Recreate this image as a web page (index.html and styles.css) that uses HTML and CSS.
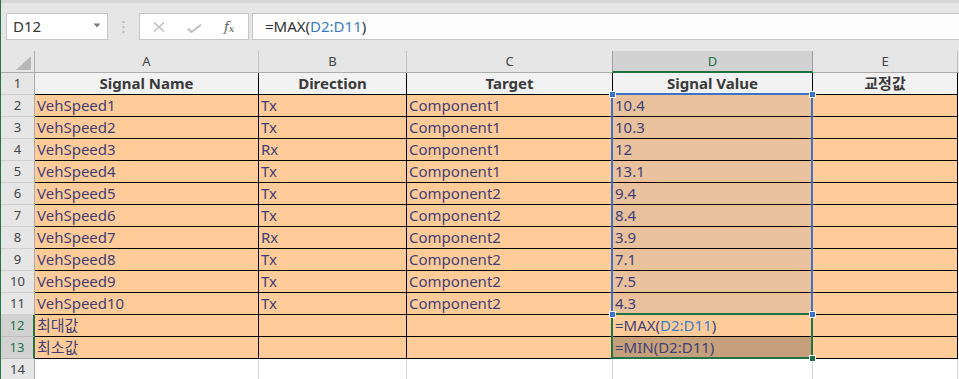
FILE: index.html
```html
<!DOCTYPE html>
<html>
<head>
<meta charset="utf-8">
<link rel="stylesheet" href="styles.css">
</head>
<body>
<div class="app">
  <div class="topstrip"></div>
  <div class="fbar">
    <div class="namebox">
      <span class="name">D12</span>
      <svg class="caret" width="8" height="5" viewBox="0 0 8 5"><path d="M0.5 0.5 L7.5 0.5 L4 4.5 Z" fill="#7b7b7b"/></svg>
    </div>
    <div class="sep">
      <svg width="3" height="12" viewBox="0 0 3 12"><rect x="0.5" y="0" width="2" height="2" fill="#b9b9b9"/><rect x="0.5" y="5" width="2" height="2" fill="#b9b9b9"/><rect x="0.5" y="10" width="2" height="2" fill="#b9b9b9"/></svg>
    </div>
    <div class="btns">
      <svg class="ico-x" width="12" height="10" viewBox="0 0 12 10"><path d="M1 0.5 L11 9.5 M11 0.5 L1 9.5" stroke="#bdbdbd" stroke-width="1.4" fill="none"/></svg>
      <svg class="ico-ok" width="15" height="9" viewBox="0 0 15 9"><path d="M0.8 4.5 L4.5 8 L14 0.8" stroke="#bdbdbd" stroke-width="2" fill="none"/></svg>
      <span class="fx"><i>f</i><sub>x</sub></span>
    </div>
    <div class="formula">=MAX(<span class="ref">D2:D11</span>)</div>
  </div>

  <div class="sheet">
    <div class="corner"><svg width="15" height="14" viewBox="0 0 15 14"><path d="M15 0 L15 14 L0 14 Z" fill="#b7b7b7"/></svg></div>
    <div class="ch">A</div><div class="ch">B</div><div class="ch">C</div><div class="ch sel">D</div><div class="ch">E</div><div class="ch last"></div>

    <div class="rh">1</div>
    <div class="c hd">Signal Name</div><div class="c hd">Direction</div><div class="c hd">Target</div><div class="c hd">Signal Value</div><div class="c hd">교정값</div><div class="c x"></div>

    <div class="rh">2</div><div class="c">VehSpeed1</div><div class="c">Tx</div><div class="c">Component1</div><div class="c rng">10.4</div><div class="c"></div><div class="c x"></div>
    <div class="rh">3</div><div class="c">VehSpeed2</div><div class="c">Tx</div><div class="c">Component1</div><div class="c rng">10.3</div><div class="c"></div><div class="c x"></div>
    <div class="rh">4</div><div class="c">VehSpeed3</div><div class="c">Rx</div><div class="c">Component1</div><div class="c rng">12</div><div class="c"></div><div class="c x"></div>
    <div class="rh">5</div><div class="c">VehSpeed4</div><div class="c">Tx</div><div class="c">Component1</div><div class="c rng">13.1</div><div class="c"></div><div class="c x"></div>
    <div class="rh">6</div><div class="c">VehSpeed5</div><div class="c">Tx</div><div class="c">Component2</div><div class="c rng">9.4</div><div class="c"></div><div class="c x"></div>
    <div class="rh">7</div><div class="c">VehSpeed6</div><div class="c">Tx</div><div class="c">Component2</div><div class="c rng">8.4</div><div class="c"></div><div class="c x"></div>
    <div class="rh">8</div><div class="c">VehSpeed7</div><div class="c">Rx</div><div class="c">Component2</div><div class="c rng">3.9</div><div class="c"></div><div class="c x"></div>
    <div class="rh">9</div><div class="c">VehSpeed8</div><div class="c">Tx</div><div class="c">Component2</div><div class="c rng">7.1</div><div class="c"></div><div class="c x"></div>
    <div class="rh">10</div><div class="c">VehSpeed9</div><div class="c">Tx</div><div class="c">Component2</div><div class="c rng">7.5</div><div class="c"></div><div class="c x"></div>
    <div class="rh">11</div><div class="c">VehSpeed10</div><div class="c">Tx</div><div class="c">Component2</div><div class="c rng">4.3</div><div class="c"></div><div class="c x"></div>
    <div class="rh sel">12</div><div class="c">최대값</div><div class="c"></div><div class="c"></div><div class="c">=MAX(<span class="ref">D2:D11</span>)</div><div class="c"></div><div class="c x"></div>
    <div class="rh sel">13</div><div class="c">최소값</div><div class="c"></div><div class="c"></div><div class="c dark">=MIN(D2:D11)</div><div class="c"></div><div class="c x"></div>
    <div class="rh">14</div><div class="e"></div><div class="e"></div><div class="e"></div><div class="e"></div><div class="e"></div><div class="e x"></div>
  </div>

  <div class="blue-box"></div>
  <div class="green-box"></div>
  <div class="hdl bh h1"></div>
  <div class="hdl bh h2"></div>
  <div class="hdl bh h3"></div>
  <div class="hdl bh h4"></div>
  <div class="hdl gh"></div>
</div>
</body>
</html>
```

FILE: styles.css
```css
* { box-sizing: border-box; }
html, body { margin: 0; padding: 0; }
body {
  width: 959px;
  height: 379px;
  overflow: hidden;
  background: #ffffff;
  font-family: "Noto Sans", "Noto Sans CJK KR", sans-serif;
}
.app {
  position: relative;
  width: 959px;
  height: 379px;
  border-left: 1px solid #217346;
  background: #e6e6e6;
  overflow: hidden;
}
.topstrip {
  height: 3px;
  background: #d6d6d6;
}
.fbar {
  height: 48px;
  display: flex;
  align-items: flex-start;
  padding-top: 10px;
}
.namebox {
  margin-left: 5px;
  width: 102px;
  height: 27px;
  background: #fff;
  border: 1px solid #c6c6c6;
  display: flex;
  align-items: center;
  justify-content: space-between;
  padding: 0 6px 0 6px;
  font-size: 15px;
  color: #333;
}
.namebox .name { margin-top: -1px; }
.namebox .caret { margin-top: -2px; }
.sep {
  width: 31px;
  height: 27px;
  display: flex;
  align-items: center;
  justify-content: center;
}
.btns {
  width: 110px;
  height: 27px;
  background: #fff;
  border: 1px solid #c6c6c6;
  display: flex;
  align-items: center;
  padding-left: 12px;
}
.ico-x { margin-left: 1px; margin-top: 1px; }
.ico-ok { margin-left: 22px; margin-top: 3px; }
.fx {
  margin-left: 22px;
  font-family: "DejaVu Serif", "Liberation Serif", serif;
  color: #5a5a5a;
  font-size: 13px;
  line-height: 1;
  margin-top: 1px;
}
.fx i { font-style: italic; }
.fx sub { font-size: 10px; font-style: italic; vertical-align: -1px; }
.formula {
  margin-left: 3px;
  flex: 1;
  height: 27px;
  background: #fdfdfd;
  border: 1px solid #c6c6c6;
  border-right: none;
  padding-left: 12px;
  font-size: 15px;
  line-height: 24px;
  color: #333;
}
.ref { color: #3a7cc8; }

.sheet {
  display: grid;
  grid-template-columns: 34px 224px 148px 206px 200px 145px 1fr;
  grid-template-rows: repeat(15, 22px);
}
.corner {
  border-right: 1px solid #ababab;
  border-bottom: 1px solid #ababab;
  display: flex;
  align-items: flex-end;
  justify-content: flex-end;
  padding: 0 3px 2px 0;
}
.ch {
  border-right: 1px solid #c4c4c4;
  border-bottom: 1px solid #ababab;
  font-size: 13px;
  color: #444;
  text-align: center;
  line-height: 21px;
}
.ch.sel {
  background: #d2d2d2;
  color: #217346;
  border-left: 1px solid #9e9e9e;
  margin-left: -1px;
  border-right: 1px solid #9e9e9e;
  border-bottom: 2px solid #217346;
}
.ch.last { border-right: none; }
.rh {
  border-right: 1px solid #ababab;
  border-bottom: 1px solid #d0d0d0;
  font-size: 13px;
  color: #444;
  text-align: center;
  line-height: 21px;
}
.rh.sel {
  background: #d2d2d2;
  color: #217346;
  border-right: 2px solid #217346;
  border-bottom-color: #bdbdbd;
}
.c {
  background: #ffcc99;
  border-right: 1px solid #000;
  border-bottom: 1px solid #000;
  font-size: 15px;
  color: #3f3f76;
  padding-left: 2px;
  line-height: 21px;
  white-space: nowrap;
  overflow: hidden;
}
.c.hd {
  background: #f2f2f2;
  font-weight: bold;
  text-align: center;
  color: #3a3a3a;
  padding-left: 0;
}
.c.rng { background: #e9c29d; }
.c.dark { background: #c5a07b; }
.c.x { background: #fff; border: none; }
.e {
  background: #fff;
  border-right: 1px solid #d4d4d4;
  border-bottom: 1px solid #d4d4d4;
}
.e.x { border: none; }

.blue-box {
  position: absolute;
  left: 610px;
  top: 93px;
  width: 202px;
  height: 222px;
  border: 2px solid #3c73c9;
}
.green-box {
  position: absolute;
  left: 610px;
  top: 313px;
  width: 202px;
  height: 46px;
  border: 2px solid #217346;
}
.hdl {
  position: absolute;
  width: 7px;
  height: 7px;
  border: 1px solid #fff;
}
.bh { background: #3c73c9; }
.h1 { left: 608px; top: 91px; }
.h2 { left: 808px; top: 91px; }
.h3 { left: 608px; top: 311px; }
.h4 { left: 808px; top: 311px; }
.gh { background: #217346; left: 808px; top: 355px; }
```
